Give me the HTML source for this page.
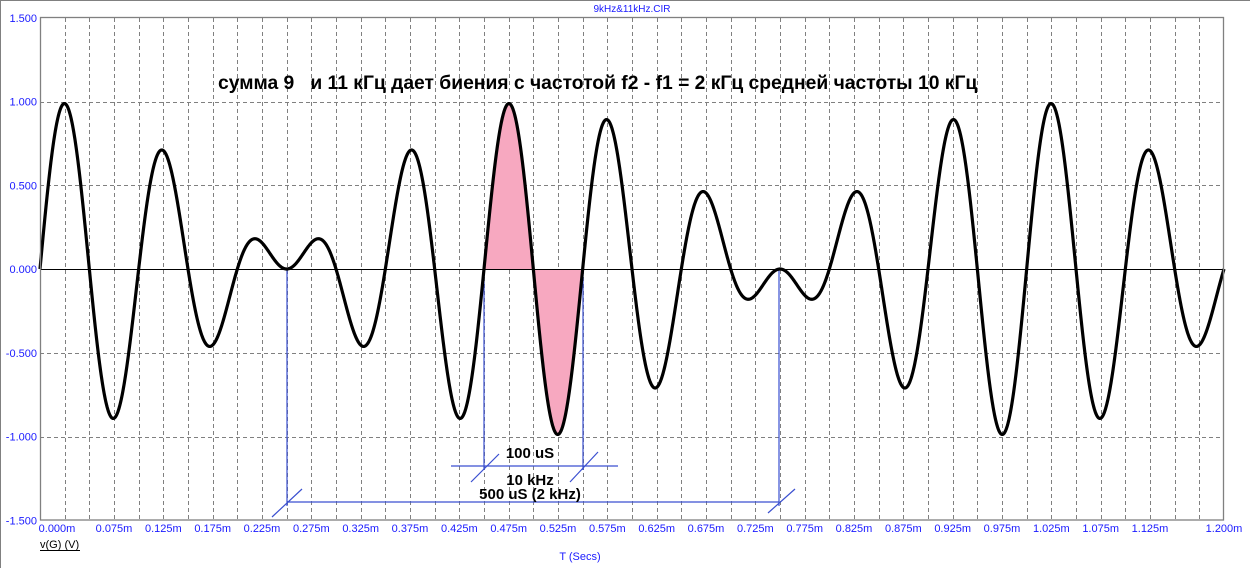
<!DOCTYPE html>
<html><head><meta charset="utf-8"><style>
html,body{margin:0;padding:0;background:#fff;}
body{width:1250px;height:568px;overflow:hidden;}
svg text{font-family:"Liberation Sans",sans-serif;}
</style></head><body>
<svg id="s" width="1250" height="568" xmlns="http://www.w3.org/2000/svg">
<rect x="0" y="0" width="1250" height="568" fill="#fff"/>
<line x1="0.5" y1="0" x2="0.5" y2="568" stroke="#808080"/>
<line x1="0" y1="0.5" x2="1250" y2="0.5" stroke="#808080"/>
<g id="grid" stroke="#808080" stroke-dasharray="4,3" stroke-width="1"></g>
<path id="fill1" fill="#f7a8c0"/>
<path id="fill2" fill="#f7a8c0"/>
<line x1="40" y1="269.5" x2="1224" y2="269.5" stroke="#000" stroke-width="1"/>
<g stroke="#3a4fd0" stroke-width="1.2" fill="none">
<line x1="287" y1="269" x2="287" y2="506"/>
<line x1="779" y1="269" x2="779" y2="506"/>
<line x1="484" y1="269" x2="484" y2="470"/>
<line x1="583" y1="269" x2="583" y2="470"/>
<line x1="451" y1="466" x2="618" y2="466"/>
<line x1="287" y1="502" x2="779" y2="502"/>
<line x1="471" y1="482" x2="499" y2="454"/>
<line x1="570" y1="482" x2="598" y2="452"/>
<line x1="272" y1="517" x2="302" y2="489"/>
<line x1="768" y1="513" x2="795" y2="489"/>
</g>
<path id="sig" fill="none" stroke="#000" stroke-width="3.2" stroke-linejoin="round"/>
<rect x="40.5" y="17.5" width="1183" height="502.5" fill="none" stroke="#808080" stroke-width="1.3"/>
<g id="yl" fill="#1a1aff" font-size="11" text-anchor="end"></g>
<g id="xl" fill="#1a1aff" font-size="11" text-anchor="middle"></g>
<text x="632" y="12" fill="#1a1aff" font-size="10" text-anchor="middle">9kHz&amp;11kHz.CIR</text>
<text x="40" y="548" fill="#000" font-size="11">v(G) (V)</text>
<line x1="40" y1="550.5" x2="80" y2="550.5" stroke="#000"/>
<text x="580" y="560" fill="#1a1aff" font-size="11" text-anchor="middle">T (Secs)</text>
<text x="218" y="89" fill="#000" font-size="19.3" font-weight="bold">сумма 9&#160;&#160;&#160;и 11 кГц дает биения с частотой f2 - f1 = 2 кГц средней частоты 10 кГц</text>
<g font-weight="bold" font-size="15" fill="#000" text-anchor="middle">
<text x="530" y="458">100 uS</text>
<text x="530" y="485">10 kHz</text>
<text x="530" y="499">500 uS (2 kHz)</text>
</g>
</svg>
<script>
var X0=40,X1=1224,Y0=269,K=167.5;
function X(t){return X0+(X1-X0)*t/1.2;}
function Y(v){return Y0-K*v;}
function f(t){return Math.sin(2*Math.PI*10*t)*Math.cos(2*Math.PI*1*t);}
var g=document.getElementById('grid'),ns='http://www.w3.org/2000/svg';
function ln(p,a,b,c,d){var l=document.createElementNS(ns,'line');l.setAttribute('x1',a);l.setAttribute('y1',b);l.setAttribute('x2',c);l.setAttribute('y2',d);p.appendChild(l);}
for(var i=1;i<48;i++){var x=Math.round(X(i*0.025))+0.5;ln(g,x,18,x,520);}
[1,0.5,-0.5,-1].forEach(function(v){var y=Math.round(Y(v))+0.5;ln(g,40,y,1224,y);});
var yl=document.getElementById('yl');
[1.5,1,0.5,0,-0.5,-1,-1.5].forEach(function(v){var t=document.createElementNS(ns,'text');t.setAttribute('x',37);t.setAttribute('y',Y(v)+4);t.textContent=v.toFixed(3);yl.appendChild(t);});
var xl=document.getElementById('xl');
var labs=[0];for(var k=0;k<22;k++)labs.push(0.075+k*0.05);labs.push(1.2);
labs.forEach(function(v,i){var t=document.createElementNS(ns,'text');var x=X(v);if(i==0){x=57;}t.setAttribute('x',x);t.setAttribute('y',532);t.textContent=v.toFixed(3)+'m';xl.appendChild(t);});
var d='';for(var i=0;i<=2400;i++){var t=i*1.2/2400;d+=(i?'L':'M')+X(t).toFixed(2)+' '+Y(f(t)).toFixed(2);}
document.getElementById('sig').setAttribute('d',d);
function fill(a,b){var s='M'+X(a)+' '+Y0;for(var i=0;i<=100;i++){var t=a+(b-a)*i/100;s+='L'+X(t).toFixed(2)+' '+Y(f(t)).toFixed(2);}return s+'L'+X(b)+' '+Y0+'Z';}
document.getElementById('fill1').setAttribute('d',fill(0.45,0.5));
document.getElementById('fill2').setAttribute('d',fill(0.5,0.55));
</script>
</body></html>
